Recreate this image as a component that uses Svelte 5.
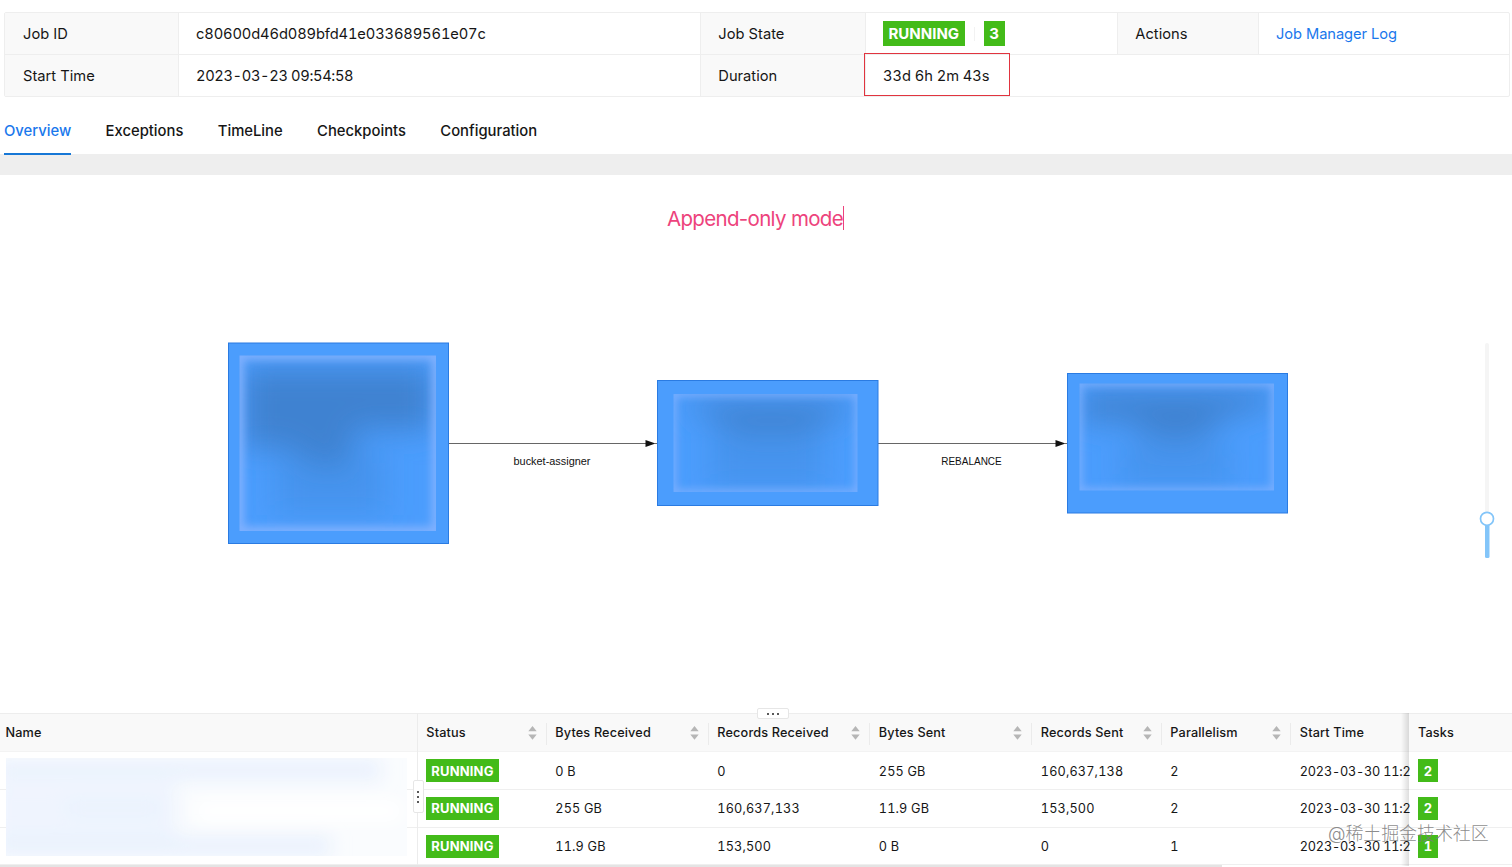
<script>
  const tabs = ['Overview', 'Exceptions', 'TimeLine', 'Checkpoints', 'Configuration'];
  const columns = ['Status', 'Bytes Received', 'Records Received', 'Bytes Sent', 'Records Sent', 'Parallelism'];
  const rows = [
    { cells: ['0 B', '0', '255 GB', '160,637,138', '2'], start: '2023-03-30 11:2', tasks: 2 },
    { cells: ['255 GB', '160,637,133', '11.9 GB', '153,500', '2'], start: '2023-03-30 11:2', tasks: 2 },
    { cells: ['11.9 GB', '153,500', '0 B', '0', '1'], start: '2023-03-30 11:2', tasks: 1 },
  ];
</script>

<main>
  <section class="desc">
    <div class="line first">
      <div class="label">Job ID</div>
      <div class="value id">c80600d46d089bfd41e033689561e07c</div>
      <div class="label">Job State</div>
      <div class="value state"><b class="tag">RUNNING</b><i></i><b class="tag">3</b></div>
      <div class="label">Actions</div>
      <div class="value"><a href="#log">Job Manager Log</a></div>
    </div>
    <div class="line second">
      <div class="label">Start Time</div>
      <div class="value time">2023-03-23 09:54:58</div>
      <div class="label">Duration</div>
      <div class="value duration"><span>33d 6h 2m 43s</span></div>
    </div>
  </section>

  <nav>
    {#each tabs as tab, i}
      <span class:active={i === 0}>{tab}</span>
    {/each}
  </nav>
  <div class="band"></div>

  <section class="graph">
    <svg width="1512" height="538" viewBox="0 175 1512 538">
      <defs>
        <filter id="soft" x="-50%" y="-50%" width="200%" height="200%"><feGaussianBlur stdDeviation="15" /></filter>
        <filter id="rim" x="-20%" y="-20%" width="140%" height="140%"><feGaussianBlur stdDeviation="4.500" /></filter>
        <clipPath id="c1"><rect x="239.500" y="355.500" width="196.500" height="175.500" /></clipPath>
        <clipPath id="c2"><rect x="673.500" y="394" width="184" height="98" /></clipPath>
        <clipPath id="c3"><rect x="1079.500" y="383.500" width="194.500" height="107" /></clipPath>
      </defs>

      <g class="edge">
        <path d="M449 443.500H647M878 443.500H1057" />
        <path class="arrow" d="M645.500 440L655.500 443.500L645.500 447ZM1055.500 440L1065.500 443.500L1055.500 447Z" />
        <path d="M655 443.500H658M1065 443.500H1068" />
      </g>
      <text x="552" y="465" textLength="77" lengthAdjust="spacingAndGlyphs">bucket-assigner</text>
      <text x="971.500" y="465" textLength="60.500" lengthAdjust="spacingAndGlyphs">REBALANCE</text>

      <rect class="node" x="228.500" y="343" width="220" height="200.500" />
      <rect class="node" x="657.500" y="380.500" width="220.500" height="125" />
      <rect class="node" x="1067.500" y="373.500" width="220" height="139.500" />

      <g clip-path="url(#c1)">
        <g filter="url(#soft)">
          <path class="dark" d="M244 368H432V430H355L350 466H310L295 448H244Z" />
          <path class="dim" d="M275 450H385V515H275Z" />
        </g>
        <rect class="rim" x="238" y="354" width="199.500" height="178.500" />
      </g>
      <g clip-path="url(#c2)">
        <g filter="url(#soft)">
          <path class="dark" d="M680 401H850V409L808 432H735Z" />
          <path class="dim" d="M710 432H825V488H710Z" />
        </g>
        <rect class="rim slim" x="672" y="392.500" width="187" height="101" />
      </g>
      <g clip-path="url(#c3)">
        <g filter="url(#soft)">
          <path class="dark" d="M1082 391H1270V406L1222 418L1202 440H1150L1132 422H1082Z" />
          <path class="dim" d="M1120 445H1230V485H1120Z" />
        </g>
        <rect class="rim slim" x="1078" y="382" width="197.500" height="110" />
      </g>

      <rect x="1485" y="343" width="4" height="170" rx="2" fill="#f5f5f5" />
      <rect x="1485" y="522" width="4.500" height="36" rx="1.500" fill="#83c5f9" />
      <circle cx="1487" cy="518.800" r="6.500" fill="#fff" stroke="#83c5f9" stroke-width="1.700" />
    </svg>
    <div class="title">Append-only mode</div>
  </section>

  <section class="table">
    <div class="row head">
      <div class="name">Name</div>
      {#each columns as column}
        <div class="cell">
          {column}
          <svg class="sort" width="9" height="14" viewBox="0 0 9 14"><path d="M4.500 0L8.700 5.200H.3ZM.3 8.500H8.700L4.500 13.700Z" /></svg>
        </div>
      {/each}
      <div class="cell start">Start Time</div>
      <div class="tasks">Tasks</div>
    </div>
    {#each rows as row}
      <div class="row body">
        <div class="name"></div>
        <div class="cell"><b class="tag small">RUNNING</b></div>
        {#each row.cells as value}
          <div class="cell">{value}</div>
        {/each}
        <div class="cell start">{row.start}</div>
        <div class="tasks"><b class="tag small">{row.tasks}</b></div>
      </div>
    {/each}
    <div class="scroll"></div>

    <svg class="redacted" width="401" height="98" viewBox="0 0 401 98">
      <defs><filter id="haze" x="-30%" y="-80%" width="160%" height="260%"><feGaussianBlur stdDeviation="9" /></filter></defs>
      <rect width="401" height="98" fill="#fafcfe" />
      <g filter="url(#haze)" fill="#e9f1fd">
        <rect x="-10" y="2" width="385" height="20" />
        <rect x="-10" y="25" width="180" height="73" opacity=".7" />
        <rect x="60" y="43" width="95" height="14" />
        <rect x="-10" y="78" width="335" height="20" />
      </g>
      <rect x="190" y="42" width="206" height="22" fill="#fff" filter="url(#haze)" />
    </svg>
    <div class="split"></div>
    <div class="handle side"><i></i><i></i><i></i></div>
    <div class="handle top"><i></i><i></i><i></i></div>
    <div class="fixed-shadow"></div>
    <div class="watermark">@稀土掘金技术社区</div>
  </section>
</main>

<style>
  :global(body) { margin: 0; background: #fff; overflow: hidden; }
  * { box-sizing: border-box; }
  main {
    width: 1512px; height: 867px; overflow: hidden; display: flex; flex-direction: column;
    font-family: Inter, "Liberation Sans", sans-serif; color: #161616; white-space: nowrap;
  }
  .desc {
    margin: 12px 2px 0 4px; height: 85px; flex: none; border: 1px solid #eeeeee; border-radius: 2px;
    font-size: 14.7px;
  }
  .line { display: grid; height: 42px; }
  .line > div { display: flex; align-items: center; padding-left: 17px; border-right: 1px solid #eeeeee; }
  .line > div:last-child { border-right: 0; }
  .first { grid-template-columns: 174px 522px 165px 252px 141px 1fr; border-bottom: 1px solid #eeeeee; }
  .second { grid-template-columns: 174px 522px 165px 1fr; height: 41px; }
  .line > .label { background: #f9f9f9; padding-left: 18px; }
  .line > .label:not(:first-child) { padding-left: 17.3px; }
  .id, .time, .duration { font-variant-numeric: tabular-nums; }
  .id { letter-spacing: -.13px; }
  .time { letter-spacing: -.37px; }
  .duration { letter-spacing: -.06px; }
  .line > .state { gap: 9px; }
  .state i { width: 1px; height: 14px; background: #f2f2f2; }
  a { color: #1a78ec; text-decoration: none; letter-spacing: -.08px; }
  .tag {
    display: inline-flex; align-items: center; justify-content: center; height: 25px; padding: 0 5.5px;
    background: #43bb19; color: #fff; font-weight: 700; font-size: 15px; margin-top: -1px;
  }
  .state .tag:last-child { width: 21px; padding: 0; }
  .tag.small { height: 23px; font-size: 13px; padding: 0 5.5px; margin-left: -.5px; margin-top: -1px; }
  .tasks .tag.small { width: 20px; padding: 0; margin-left: 0; }
  .line > .duration { position: relative; }
  .duration::before {
    content: ""; position: absolute; left: -2px; top: -2px; width: 146px; height: 43px;
    box-sizing: border-box; border: 1px solid #e1343f;
  }
  nav { display: flex; gap: 34.4px; height: 57px; flex: none; padding-left: 4px; font-size: 14.8px; font-weight: 500; }
  nav span { display: flex; align-items: center; height: 58px; padding-bottom: 8px; padding-top: 19px; border-bottom: 2px solid transparent; z-index: 1; }
  nav .active { color: #1a78ec; border-color: #1677d6; }
  .band { height: 21px; flex: none; background: #eee; }
  .graph { position: relative; height: 538px; flex: none; }
  .graph > svg { display: block; }
  .title {
    position: absolute; left: 667px; top: 31px; height: 24px; line-height: 25px; font-size: 20.5px;
    letter-spacing: -.68px; color: #ed437c; border-right: 1px solid #ed437c; width: 177px;
  }
  .edge path { stroke: #666; fill: none; }
  .edge .arrow { fill: #111; stroke: none; }
  text { font-family: "Liberation Sans", sans-serif; font-size: 10.8px; text-anchor: middle; fill: #111; }
  .node { fill: #4b9dfd; stroke: #2a7be2; stroke-width: 1; }
  .dark { fill: #3d80cc; opacity: .9; }
  .dim { fill: #3f85d8; opacity: .4; }
  .rim { fill: none; stroke: #8db6ff; stroke-width: 12; filter: url(#rim); opacity: .8; }
  .slim { stroke-width: 8; opacity: .75; }

  .table { position: relative; height: 154px; flex: none; font-size: 12.7px; letter-spacing: .15px; }
  .row { display: grid; grid-template-columns: 417.5px 129px 162px 161.5px 162px 129.5px 129.5px 118px 1fr; height: 37.75px; border-bottom: 1px solid #efefef; }
  .row > div { display: flex; align-items: center; min-width: 0; }
  .body { font-variant-numeric: tabular-nums; }
  .body > div { padding-top: 1.4px; }
  .row.head { height: 39px; background: #f9f9f9; border-top: 1px solid #ededed; border-bottom-color: #f3f3f3; font-weight: 500; }
  .row > .name { padding-left: 5.5px; }
  .row > .cell { padding-left: 8.8px; padding-right: 10px; position: relative; }
  .row > .start { padding-right: 0; }
  .body > .start { letter-spacing: -.2px; }
  .row > .tasks { padding-left: 9px; }
  .head .cell { justify-content: space-between; }
  .head .cell:not(.start)::after { content: ""; position: absolute; right: 0; top: 9px; height: 22px; width: 1px; background: #ebebeb; }
  .sort { fill: #b6b6b6; flex: none; }
  .scroll { height: 2px; width: 1222px; background: #e4e4e4; }
  .redacted { position: absolute; left: 6px; top: 45px; }
  .split { position: absolute; left: 417px; top: 0; width: 1px; height: 152px; background: #ececec; }
  .handle { position: absolute; display: flex; align-items: center; justify-content: center; background: #fff; border: 1px solid #e6e6e6; border-radius: 2px; }
  .handle i { width: 2px; height: 2px; border-radius: 50%; background: #222; }
  .side { left: 413px; top: 67px; width: 11px; height: 33px; flex-direction: column; gap: 3px; padding-right: 2px; }
  .top { left: 757px; top: -5px; width: 32px; height: 11px; gap: 3px; padding-top: 1px; }
  .fixed-shadow { position: absolute; left: 1401px; top: 0; width: 8px; height: 153px; background: linear-gradient(to right, transparent, rgba(0, 0, 0, .13)); }
  .watermark {
    position: absolute; left: 1328px; top: 109px; font: 18px/24px Inter, "Noto Sans CJK SC", sans-serif;
    font-weight: 300; letter-spacing: -.1px; color: rgba(125, 125, 125, .9);
  }
</style>
